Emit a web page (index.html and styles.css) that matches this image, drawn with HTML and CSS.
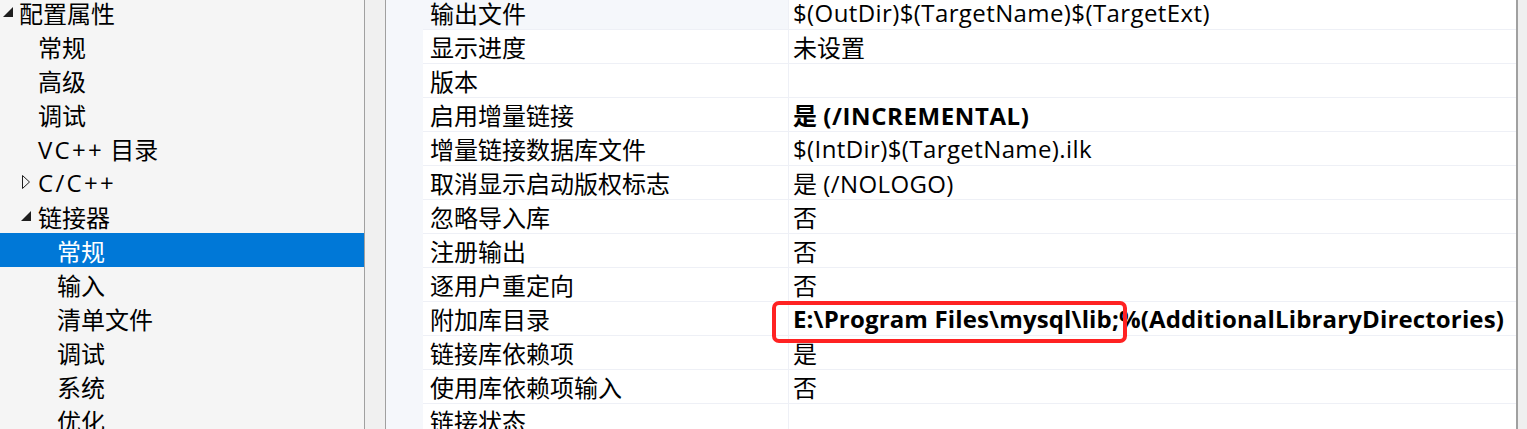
FILE: index.html
```html
<!DOCTYPE html>
<html lang="zh-CN">
<head>
<meta charset="utf-8">
<title>属性页</title>
<link rel="stylesheet" href="styles.css">
</head>
<body>
<div class="window">
  <nav class="tree">
    <div class="node lvl0"><span class="tw"><svg class="ico" width="12" height="34" viewBox="0 0 12 34"><path d="M1 22 L11 22 L11 12 Z" fill="#1e1e1e"/></svg></span><span>配置属性</span></div>
    <div class="node lvl1"><span class="tw"></span><span>常规</span></div>
    <div class="node lvl1"><span class="tw"></span><span>高级</span></div>
    <div class="node lvl1"><span class="tw"></span><span>调试</span></div>
    <div class="node lvl1"><span class="tw"></span><span><span class="lat">VC++</span> 目录</span></div>
    <div class="node lvl1"><span class="tw"><svg class="ico" width="12" height="34" viewBox="0 0 12 34"><path d="M1.5 10.5 L8.5 17 L1.5 23.5 Z" fill="none" stroke="#1e1e1e" stroke-width="1"/></svg></span><span class="lat">C/C++</span></div>
    <div class="node lvl1"><span class="tw"><svg class="ico" width="12" height="34" viewBox="0 0 12 34"><path d="M0 22 L10 22 L10 12 Z" fill="#1e1e1e"/></svg></span><span>链接器</span></div>
    <div class="node lvl2 sel"><span class="tw"></span><span>常规</span></div>
    <div class="node lvl2"><span class="tw"></span><span>输入</span></div>
    <div class="node lvl2"><span class="tw"></span><span>清单文件</span></div>
    <div class="node lvl2"><span class="tw"></span><span>调试</span></div>
    <div class="node lvl2"><span class="tw"></span><span>系统</span></div>
    <div class="node lvl2"><span class="tw"></span><span>优化</span></div>
  </nav>
  <div class="splitter"></div>
  <div class="catstrip"></div>
  <div class="grid">
    <div class="row first"><div class="name">输出文件</div><div class="val"><span class="lat">$(OutDir)$(TargetName)$(TargetExt)</span></div></div>
    <div class="row"><div class="name">显示进度</div><div class="val"><span>未设置</span></div></div>
    <div class="row"><div class="name">版本</div><div class="val"></div></div>
    <div class="row"><div class="name">启用增量链接</div><div class="val bold"><span>是 <span class="latw">(/INCREMENTAL)</span></span></div></div>
    <div class="row"><div class="name">增量链接数据库文件</div><div class="val"><span class="lat">$(IntDir)$(TargetName).ilk</span></div></div>
    <div class="row"><div class="name">取消显示启动版权标志</div><div class="val"><span>是 <span class="lat">(/NOLOGO)</span></span></div></div>
    <div class="row"><div class="name">忽略导入库</div><div class="val"><span>否</span></div></div>
    <div class="row"><div class="name">注册输出</div><div class="val"><span>否</span></div></div>
    <div class="row"><div class="name">逐用户重定向</div><div class="val"><span>否</span></div></div>
    <div class="row"><div class="name">附加库目录</div><div class="val bold"><span class="latb"><span class="mark">E:\Program Files\mysql\lib;</span>%(AdditionalLibraryDirectories)</span></div></div>
    <div class="row"><div class="name">链接库依赖项</div><div class="val"><span>是</span></div></div>
    <div class="row"><div class="name">使用库依赖项输入</div><div class="val"><span>否</span></div></div>
    <div class="row"><div class="name">链接状态</div><div class="val"></div></div>
  </div>
  <div class="rightedge"></div>
</div>
</body>
</html>
```
FILE: styles.css
```css
html, body {
  margin: 0;
  padding: 0;
  height: 100%;
  overflow: hidden;
}
body {
  font-family: "Open Sans", "Noto Sans CJK SC", sans-serif;
  font-size: 24px;
  color: #000;
  background: #f0f0f0;
}
.window {
  display: flex;
  height: 429px;
  overflow: hidden;
}
.tree {
  width: 364px;
  flex: none;
  background: #f5f5f5;
  border-right: 1px solid #a0a0a0;
  margin-top: -5px;
}
.node {
  height: 34px;
  display: flex;
  align-items: center;
  white-space: nowrap;
}
.node.lvl0 { padding-left: 2px; }
.node.lvl1 { padding-left: 21px; }
.node.lvl2 { padding-left: 40px; }
.node.sel {
  background: #0078d7;
  color: #fff;
}
.tw {
  width: 17px;
  height: 34px;
  flex: none;
  display: flex;
  align-items: flex-start;
}
.ico {
  display: block;
}
.lat {
  letter-spacing: 0.4px;
}
.tree .lat {
  letter-spacing: 2.3px;
}
.latb {
  letter-spacing: 0.15px;
}
.latw {
  letter-spacing: 0.6px;
}
.splitter {
  width: 20px;
  flex: none;
  background: #f0f0f0;
  border-right: 1px solid #a0a0a0;
}
.catstrip {
  width: 37px;
  flex: none;
  background: #f5f7fb;
}
.grid {
  flex: 1;
  background: #fff;
  margin-top: -4px;
  border-right: 2px solid #a0a0a0;
}
.row {
  display: flex;
  height: 34px;
  border-bottom: 1px solid #eef0f6;
  box-sizing: border-box;
}
.row .name {
  width: 358px;
  flex: none;
  padding-left: 7px;
  border-right: 1px solid #eef0f6;
  display: flex;
  align-items: center;
  white-space: nowrap;
}
.row.first .name {
  background: #f5f7fb;
}
.row .val {
  flex: 1;
  padding-left: 4px;
  display: flex;
  align-items: center;
  white-space: nowrap;
}
.val.bold {
  font-weight: 700;
}
.mark {
  position: relative;
}
.mark::after {
  content: "";
  position: absolute;
  left: -21px;
  right: -8px;
  top: -1px;
  bottom: -8px;
  border: 4px solid #f22;
  border-radius: 7px;
}
.rightedge {
  width: 9px;
  flex: none;
  background: #efefef;
}
```
